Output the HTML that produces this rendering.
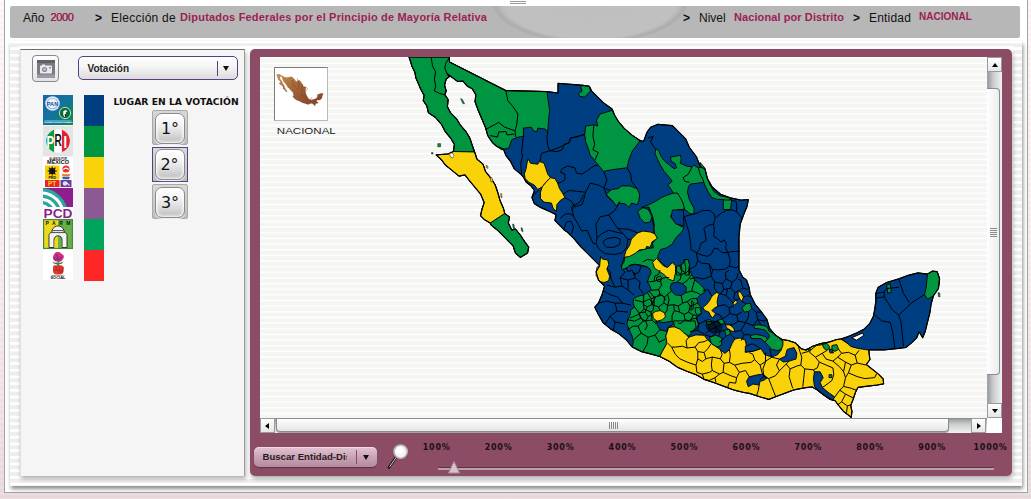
<!DOCTYPE html>
<html lang="es">
<head>
<meta charset="utf-8">
<title>Atlas de Resultados Electorales Federales</title>
<style>
html,body{margin:0;padding:0;}
body{width:1031px;height:499px;overflow:hidden;position:relative;
 font-family:"Liberation Sans",sans-serif;color:#111;
 background:repeating-linear-gradient(to bottom,rgba(255,255,255,.08) 0,rgba(255,255,255,.08) 3px,rgba(120,60,80,.02) 3px,rgba(120,60,80,.02) 6px),linear-gradient(to bottom,#fef7f7 0%,#fbeeef 45%,#f3e3e6 80%,#ebdadd 100%);}
.abs{position:absolute;}
#outer{left:4px;top:-4px;width:1022px;height:495px;background:#fff;border:1px solid #9ca6a6;box-sizing:content-box;}
#rightpink{left:1028px;top:0;width:3px;height:499px;background:#fbf3f3;}
#hdr{left:10px;top:6px;width:1010px;height:32px;border-radius:2px;
 background:#b7b7b7;}
#hdr .sw{left:470px;top:0;width:220px;height:32px;overflow:hidden;background:radial-gradient(ellipse 100px 44px at 50% -6px,rgba(255,255,255,.10) 0,rgba(255,255,255,.13) 88%,rgba(0,0,0,.06) 96%,rgba(0,0,0,0) 100%);}
.t{position:absolute;white-space:nowrap;line-height:1;}
.k{color:#111;font-size:12px;}
.m{color:#9b1f55;font-weight:bold;font-size:11px;}
#stripe{left:10px;top:41px;width:1012px;height:445px;
 background:repeating-linear-gradient(to bottom,#ffffff 0,#ffffff 1.7px,#eeeeee 2.8px,#eeeeee 5.8px,#ffffff 6.7px);
 box-shadow:1px 3px 4px rgba(0,0,0,.45);}
#left{left:20px;top:49px;width:223px;height:426px;background:#f5f5f5;
 border-top:1px solid #6f6f6f;border-right:1px solid #9a9a9a;border-left:1px solid #e0e0e0;box-shadow:1px 3px 4px rgba(0,0,0,.3);}
#mauve{left:250px;top:49px;width:762px;height:427px;background:#8c4c66;border-radius:5px;box-shadow:1px 3px 4px rgba(0,0,0,.3);}
#map{left:260px;top:57px;width:727px;height:361px;overflow:hidden;
 background:repeating-linear-gradient(to bottom,#fbfbfa 0,#ffffff .65px,#f5f5f4 1.95px,#f5f5f4 5px,#fbfbfa 5.65px);}

#cam{left:32px;top:55px;width:25px;height:25px;border:1px solid #8a8a8a;border-radius:4px;background:linear-gradient(#ffffff,#e4e4e4);}
#cam svg{position:absolute;left:4px;top:4px;}
#combo{left:78px;top:56px;width:158px;height:22px;border:1px solid #5b3f86;border-radius:5px;background:linear-gradient(#ffffff 0%,#f4f4f4 45%,#dcdcdc 100%);}
#combo .dv{left:138px;top:4px;width:1px;height:15px;background:#5b3f86;}
.arr{width:0;height:0;border-left:3.5px solid transparent;border-right:3.5px solid transparent;border-top:5px solid #111;}
.dj{font-family:"DejaVu Sans","Liberation Sans",sans-serif;}
.logo{left:43px;width:30px;height:30px;overflow:hidden;}
.bar{left:84px;width:20px;height:31px;}
.pb{left:152px;width:36px;height:35px;background:linear-gradient(#d8d8d8,#bdbdbd);border:1px solid #a9a9a9;box-sizing:border-box;border-radius:2px;}
.pb i{position:absolute;left:2px;top:1.5px;width:30px;height:31px;border-radius:7px;border:1px solid #8a8a8a;box-sizing:border-box;background:linear-gradient(#ffffff 0%,#f4f4f4 35%,#d9d9d9 70%,#bcbcbc 100%);box-shadow:0 1px 1px rgba(255,255,255,.9),inset 0 0 3px 1px #fff;}
.pb b{position:absolute;left:0;top:9.5px;width:34px;text-align:center;font:normal 16px/1 "DejaVu Sans","Liberation Sans",sans-serif;color:#111;}

#vsb{left:987px;top:57px;width:15px;height:361px;box-shadow:inset 1px 0 0 #a5a5a5;background:linear-gradient(to right,#8f9497 0,#c9cccd 40%,#f2f2f2 100%);}
#hsb{left:260px;top:418px;width:727px;height:15px;box-shadow:inset 0 1px 0 #8d8d8d;background:linear-gradient(to bottom,#8f9497 0,#c9cccd 40%,#f2f2f2 100%);}
#corner{left:987px;top:418px;width:15px;height:15px;background:#fff;}
.sbtn{width:15px;height:15px;box-sizing:border-box;border:1px solid #9a9a9a;background:linear-gradient(#ffffff,#e6e6e6);}
#vth{left:0px;top:31px;width:13px;height:287px;border:1px solid #8a8a8a;border-left:0;box-sizing:border-box;border-radius:0 4px 4px 0;background:linear-gradient(to right,#ffffff,#ececec);}
#hth{left:16px;top:1px;width:673px;height:13px;box-shadow:0 1px 1px rgba(0,0,0,.35);border:1px solid #8a8a8a;border-top:0;box-sizing:border-box;border-radius:0 0 4px 4px;background:linear-gradient(to bottom,#ffffff,#e4e4e4);}
#bcombo{left:254px;top:447px;width:123px;height:20px;border-radius:5px;background:linear-gradient(#e2c6d2 0%,#c9a3b5 50%,#b48a9e 100%);box-shadow:0 1px 1px rgba(0,0,0,.35),inset 0 1px 0 rgba(255,255,255,.4);}
#bcombo .dv{left:102px;top:3px;width:1px;height:14px;background:#8c4c66;}
.zl{font-family:"DejaVu Sans","Liberation Sans",sans-serif;font-weight:bold;font-size:8px;letter-spacing:.75px;color:#1a1014;top:443.5px;}
#track{left:438px;top:467px;width:556px;height:2px;background:#b9a0aa;border-top:1px solid #5e3044;border-radius:1px;}
</style>
</head>
<body>
<div id="outer" class="abs"></div>

<div class="abs" style="left:510px;top:1px;width:16px;height:1px;background:#9a9a9a;"></div><div class="abs" style="left:510px;top:3px;width:16px;height:1px;background:#9a9a9a;"></div>
<div id="hdr" class="abs"><div class="sw abs"></div></div>
<span class="t k" style="left:23px;top:12px;">Año</span>
<span class="t m" style="left:50.5px;top:12px;font-weight:normal;letter-spacing:-.35px;text-shadow:0 0 .4px #9b1f55;">2000</span>
<span class="t k" style="left:95px;top:12px;font-weight:bold;">&gt;</span>
<span class="t k" style="left:111px;top:12px;letter-spacing:.27px;">Elección de</span>
<span class="t m" style="left:180px;top:12px;letter-spacing:.18px;">Diputados Federales por el Principio de Mayoría Relativa</span>
<span class="t k" style="left:683px;top:12px;font-weight:bold;">&gt;</span>
<span class="t k" style="left:699px;top:12px;">Nivel</span>
<span class="t m" style="left:734px;top:12px;letter-spacing:.09px;">Nacional por Distrito</span>
<span class="t k" style="left:853px;top:12px;font-weight:bold;">&gt;</span>
<span class="t k" style="left:869px;top:12px;letter-spacing:.2px;">Entidad</span>
<span class="t m" style="left:919px;top:12px;font-size:10px;">NACIONAL</span>

<div id="stripe" class="abs"></div>
<div class="abs" style="left:20px;top:46px;width:993px;height:433px;background:#fff;"></div>
<div id="left" class="abs"></div>

<div id="cam" class="abs"><svg width="18" height="18" viewBox="0 0 18 18"><rect x="0" y="0" width="18" height="18" rx="1" fill="#7a7a82"/><rect x="0" y="0" width="18" height="3" fill="#5f5f68"/><rect x="0" y="14.5" width="18" height="3.5" fill="#9a9aa2"/><rect x="3" y="5.5" width="12" height="8" rx="1" fill="#e9e9ee"/><rect x="5" y="4.5" width="3" height="1.5" fill="#e9e9ee"/><circle cx="7.5" cy="9.5" r="2.6" fill="#8d8d96"/><circle cx="7.5" cy="9.5" r="1.3" fill="#c9c9d0"/><rect x="12" y="7" width="2" height="1.4" fill="#8d8d96"/></svg></div>
<div id="combo" class="abs"><div class="dv abs"></div><div class="arr abs" style="left:144px;top:9px;"></div></div>
<span class="t" style="left:87.5px;top:63.5px;font-size:10px;font-weight:bold;color:#222;">Votación</span>
<span class="t dj" style="left:113.5px;top:97px;font-size:9.25px;font-weight:bold;color:#111;">LUGAR EN LA VOTACIÓN</span>


<!--LOGOS-->
<svg class="abs logo" style="top:95px" viewBox="0 0 30 30" width="30" height="30">
<defs><linearGradient id="lg1" x1="0" y1="0" x2="1" y2="1"><stop offset="0" stop-color="#1d5fb0"/><stop offset=".5" stop-color="#12749a"/><stop offset="1" stop-color="#0b8f3f"/></linearGradient></defs>
<rect width="30" height="30" fill="url(#lg1)"/>
<circle cx="9.5" cy="8.5" r="7.3" fill="#dfeaf6"/><circle cx="9.5" cy="8.5" r="5.6" fill="#6a9ad0"/><circle cx="9.5" cy="8.5" r="5" fill="#eef3fa"/>
<text x="9.5" y="10.6" font-family="Liberation Sans, sans-serif" font-weight="bold" font-size="5.6" text-anchor="middle" fill="#1b4f9e">PAN</text>
<circle cx="22" cy="18" r="5.6" fill="#0a6a34" stroke="#cfe8d6" stroke-width=".9"/>
<path d="M20.3 16.2c1.2-1.4 3.6-1.2 4.2.4l-1.8.5.4 3.4-1.9 1.6-1-2.6z" fill="#fff"/><path d="M21.6 19.2l1.3-.3.2 2-1 .9z" fill="#111"/>
<rect x="1.5" y="25" width="27" height="3" fill="#5aa3d8" opacity=".85"/>
<text x="15" y="27.5" font-family="Liberation Sans, sans-serif" font-weight="bold" font-size="2.3" text-anchor="middle" fill="#eaf4ff">ALIANZA POR EL CAMBIO</text>
</svg>
<svg class="abs logo" style="top:126px" viewBox="0 0 30 30" width="30" height="30">
<rect width="30" height="30" fill="#e4e4e4"/>
<clipPath id="cp2"><circle cx="15" cy="15" r="11.8"/></clipPath>
<g clip-path="url(#cp2)"><rect x="0" y="0" width="11.3" height="30" fill="#0c9a49"/><rect x="11.3" y="0" width="7.6" height="30" fill="#ffffff"/><rect x="18.9" y="0" width="12" height="30" fill="#e2202c"/></g>
<text x="3.4" y="21.6" font-family="Liberation Sans, sans-serif" font-weight="bold" font-size="17" textLength="7.6" lengthAdjust="spacingAndGlyphs" fill="#fff">P</text>
<text x="11.6" y="20.4" font-family="Liberation Sans, sans-serif" font-weight="bold" font-size="16" textLength="7.2" lengthAdjust="spacingAndGlyphs" fill="#111">R</text>
<text x="20.4" y="21.6" font-family="Liberation Sans, sans-serif" font-weight="bold" font-size="17" textLength="3.6" lengthAdjust="spacingAndGlyphs" fill="#fff">I</text>
</svg>
<svg class="abs logo" style="top:157px" viewBox="0 0 30 30" width="30" height="30">
<rect width="30" height="30" fill="#fff"/>
<text x="15" y="3" font-family="Liberation Sans, sans-serif" font-weight="bold" font-size="2.6" text-anchor="middle" fill="#222">ALIANZA POR</text>
<text x="15" y="7.3" font-family="Liberation Sans, sans-serif" font-weight="bold" font-size="5.4" text-anchor="middle" fill="#111" textLength="22" lengthAdjust="spacingAndGlyphs">MÉXICO</text>
<rect x="2" y="8.5" width="14.5" height="14" fill="#f6d10a"/>
<circle cx="9.2" cy="14" r="3.1" fill="#111"/><circle cx="9.2" cy="14" r="1.3" fill="#f6d10a"/>
<path d="M9.2 9.4v9.2M4.6 14h9.2M5.9 10.7l6.6 6.6M12.5 10.7l-6.6 6.6" stroke="#111" stroke-width="1.1"/>
<text x="9.2" y="22.2" font-family="Liberation Sans, sans-serif" font-weight="bold" font-size="3.6" text-anchor="middle" fill="#111">PRD</text>
<rect x="17.5" y="8.5" width="11" height="7" fill="#fff"/><circle cx="23" cy="12" r="3.6" fill="#e63428"/><path d="M20.3 12.6c1.7-2 3.7-2 5.4 0" stroke="#fff" stroke-width="1.2" fill="none"/>
<rect x="17.5" y="15.8" width="11" height="6.8" fill="#f3f3f3"/><path d="M18.5 17.2h9l-1.5 2.3h-6z" fill="#e8742a"/><path d="M19 20h8l-1.2 2.2h-5.6z" fill="#2a62b8"/>
<rect x="2" y="23" width="14.5" height="7" fill="#e3242b"/>
<text x="9.2" y="29.2" font-family="Liberation Sans, sans-serif" font-weight="bold" font-size="6.4" text-anchor="middle" fill="#f8d80a">PT</text>
<rect x="17.5" y="23" width="11" height="7" fill="#6a3c9a"/><circle cx="22" cy="26.5" r="2.2" fill="#e9e1f3"/><path d="M23 25l3.5 3.5" stroke="#e9e1f3" stroke-width="1.1"/>
</svg>
<svg class="abs logo" style="top:188px" viewBox="0 0 30 30" width="30" height="30">
<rect width="30" height="30" fill="#fff"/>
<clipPath id="cp4"><rect x="0" y="0" width="30" height="19"/></clipPath>
<g clip-path="url(#cp4)"><rect width="30" height="19" fill="#8c1f8e"/>
<circle cx="-2" cy="27" r="27" fill="#2aa79a"/><circle cx="-2" cy="27" r="23.6" fill="#fff"/><circle cx="-2" cy="27" r="20.6" fill="#2aa79a"/><circle cx="-2" cy="27" r="17.2" fill="#fff"/><circle cx="-2" cy="27" r="14.2" fill="#2aa79a"/><circle cx="-2" cy="27" r="10.8" fill="#fff"/><circle cx="-2" cy="27" r="8" fill="#2aa79a"/></g>
<text x="15" y="29.6" font-family="Liberation Sans, sans-serif" font-weight="bold" font-size="12.6" text-anchor="middle" fill="#8c1f8e" textLength="29" lengthAdjust="spacingAndGlyphs">PCD</text>
</svg>
<svg class="abs logo" style="top:219px" viewBox="0 0 30 30" width="30" height="30">
<rect width="30" height="30" fill="#3f8a3a"/>
<rect x="1.2" y="1.2" width="13.8" height="27.6" fill="#ecd91e"/><rect x="15" y="1.2" width="13.8" height="27.6" fill="#67b04a"/>
<text x="15" y="5.8" font-family="Liberation Sans, sans-serif" font-weight="bold" font-size="5" text-anchor="middle" fill="#111" textLength="25" lengthAdjust="spacing">PARM</text>
<path d="M6 28.5V16.5c0-2 1.5-3 3-3.4V11.5c1-3.4 4-4.6 6-4.6s5 1.2 6 4.6v1.6c1.500.4 3 1.400 3 3.400V28.500h-5V21c0-2.600-1.600-4.200-4-4.200S11 18.400 11 21v7.500z" fill="#f4f4f4" stroke="#222" stroke-width=".9"/>
<path d="M9.500 11.600h11M8.800 13.600h12.400" stroke="#222" stroke-width=".8"/>
<rect x="11.500" y="21" width="3.500" height="7.500" fill="#ecd91e"/><rect x="15" y="21" width="3.500" height="7.500" fill="#67b04a"/>
</svg>
<svg class="abs logo" style="top:250px" viewBox="0 0 30 30" width="30" height="30">
<rect width="30" height="30" fill="#fff"/>
<path d="M11.500 3.500c2-2 5.500-2 7 .5 2.500.5 3 3 1.500 5-1 2.500-4 3.500-6.500 2.500-3-.5-4-3-3.500-5z" fill="#d32f7c"/>
<path d="M13 4.500c1.500 1 2 3 1 5 2 .5 4-1 4.500-3" fill="none" stroke="#7a2a8e" stroke-width="1.200"/>
<path d="M12 7c-1 1.500-.5 3 1 4" fill="none" stroke="#7a2a8e" stroke-width="1"/>
<path d="M9.500 11.500c2 1.500 4.500 1.500 5.500.5 1 1 4 1 5.500-.5-.5 2-2.500 3-5.500 3s-5-1-5.500-3z" fill="#2f8a3c"/>
<path d="M14.200 13.500h1.800v3h-1.800z" fill="#2f8a3c"/>
<path d="M10 17c0-1.500 2-2.200 3.200-1.500 1-.8 2.600-.8 3.400 0 1-.6 2.600-.3 3 .8 1 .2 1.400 1.200 1.200 2.200l-.4 3.500c-.3 1.500-1.500 2.500-3 2.500h-4c-2 0-3.400-1.500-3.400-3.500z" fill="#e23a34"/>
<path d="M13.200 15.800v4M16.600 15.800v4M19.600 16.600v3.400M10.500 20.200h8.500c1 0 1 1.800 0 1.800h-4" fill="none" stroke="#a01c1c" stroke-width=".7"/>
<text x="15" y="25.700" font-family="Liberation Sans, sans-serif" font-weight="bold" font-size="1.900" text-anchor="middle" fill="#333">DEMOCRACIA</text>
<text x="15" y="29.300" font-family="Liberation Sans, sans-serif" font-weight="bold" font-size="4" text-anchor="middle" fill="#111">SOCIAL</text>
</svg>
<!--/LOGOS-->
<div class="bar abs" style="top:95px;background:#003e82;"></div>
<div class="bar abs" style="top:126px;background:#009540;"></div>
<div class="bar abs" style="top:157px;background:#fad20a;"></div>
<div class="bar abs" style="top:188px;background:#8c5a93;"></div>
<div class="bar abs" style="top:219px;background:#00a45c;"></div>
<div class="bar abs" style="top:250px;background:#ff2626;"></div>

<div class="pb abs" style="top:110px;"><i></i><b>1°</b></div>
<div class="pb abs" style="top:147px;border:1.5px solid #5b3f86;border-radius:0;"><i style="left:1.5px;top:1px;"></i><b style="left:-.5px;top:9px;">2°</b></div>
<div class="pb abs" style="top:184px;"><i></i><b>3°</b></div>
<div id="mauve" class="abs"></div>
<div id="map" class="abs"><!--MAP--><svg width="727" height="361" viewBox="260 57 727 361" style="position:absolute;left:0;top:0">
<g stroke="#000" stroke-width="1" stroke-linejoin="round">
<polygon fill="#003e82" points="449.3,57.0 449.5,62.0 505.9,90.6 547.3,91.6 558.0,93.0 558.0,83.4 580.9,85.1 589.3,86.3 591.7,91.1 597.7,97.1 603.8,103.1 612.2,109.1 614.6,115.2 618.2,121.2 624.2,128.4 632.6,135.6 639.9,140.4 643.5,141.6 647.1,132.0 650.7,127.2 657.9,124.3 672.5,125.6 678.5,131.7 685.7,138.9 689.3,147.3 696.5,156.9 700.2,166.5 705.0,169.0 707.4,178.6 712.2,187.0 720.6,194.2 730.2,197.8 741.1,200.2 748.3,199.5 747.1,206.2 743.8,214.4 740.2,224.1 739.0,236.1 739.0,248.1 739.0,260.2 739.0,269.8 742.6,277.0 746.5,280.0 749.0,287.2 750.2,294.4 755.0,304.1 761.0,311.3 767.0,319.7 769.4,328.1 775.4,335.3 782.6,339.7 788.1,340.5 795.3,342.9 801.4,348.9 806.2,350.1 812.2,346.5 820.6,343.6 829.0,342.1 836.2,339.7 840.9,339.0 848.1,336.6 856.5,333.0 863.8,329.4 869.8,323.4 873.4,316.2 874.6,310.2 875.8,301.7 875.8,293.3 878.2,287.3 886.6,282.5 898.7,278.9 908.3,275.3 917.9,272.9 927.5,274.1 932.3,271.2 937.2,271.7 939.6,278.9 938.4,288.5 933.5,295.7 931.1,304.1 929.9,312.6 927.5,322.2 925.1,331.8 922.7,337.8 919.1,331.8 916.7,337.8 911.9,342.6 905.9,347.5 896.2,348.7 884.2,349.9 869.8,349.9 868.7,350.1 869.9,359.7 866.3,364.5 872.3,369.3 878.4,374.1 883.2,379.0 883.6,383.8 877.2,385.0 867.5,386.2 857.9,387.4 855.5,392.2 853.1,399.4 850.7,405.4 851.9,411.4 851.2,417.4 848.3,415.0 843.5,411.4 838.6,405.4 835.0,400.6 830.2,399.4 823.0,394.6 817.0,389.8 812.2,386.9 803.8,387.9 794.1,389.8 784.5,393.4 776.1,396.5 768.9,399.4 760.5,397.0 749.6,393.4 744.0,392.5 734.4,390.2 724.7,386.6 715.1,383.0 704.3,379.4 695.9,374.6 686.2,371.0 677.8,367.4 669.4,361.4 659.8,356.5 651.4,354.1 641.7,351.7 632.1,346.9 626.1,339.7 618.9,333.7 610.5,328.9 603.2,322.9 598.4,314.4 594.8,307.2 598.5,303.0 602.1,294.6 604.5,286.2 598.5,280.2 596.1,271.7 599.7,265.7 594.9,260.9 587.7,253.7 580.5,246.5 574.4,239.2 567.2,232.0 564.5,230.2 559.7,225.4 554.9,220.6 556.1,214.6 550.1,211.7 540.5,207.4 534.4,203.8 532.0,197.7 534.4,190.5 530.8,185.7 526.0,182.1 523.6,177.3 520.3,173.7 514.3,168.9 510.7,161.7 505.9,155.6 503.5,149.1 496.2,146.0 492.6,142.8 487.8,135.6 485.4,127.2 481.8,118.8 478.2,110.3 475.1,101.9 475.8,94.7 472.2,88.7 467.4,86.3 463.0,81.0 457.7,81.5 451.7,77.1 447.2,73.8 449.3,76.7 446.2,79.0 444.5,85.0 446.2,91.0 444.8,94.7 448.1,99.5 447.4,106.7 450.5,112.7 456.5,118.8 460.2,124.8 466.2,132.0 469.8,138.0 472.2,145.2 474.6,152.0 477.0,159.2 483.0,164.1 485.4,171.3 490.2,177.3 495.0,184.5 497.5,191.7 499.9,200.2 503.5,208.6 504.7,213.4 509.5,217.0 508.3,223.0 511.9,230.2 515.5,229.0 520.3,235.0 525.1,242.3 528.7,247.1 527.5,253.1 520.3,257.4 515.5,253.1 513.1,245.9 505.9,238.7 497.5,230.2 491.4,225.4 490.2,223.0 484.2,219.4 480.6,215.8 481.8,209.8 484.2,202.6 480.6,194.1 474.6,186.9 468.6,179.7 465.0,174.9 459.0,176.1 451.7,170.1 445.7,165.3 440.9,159.2 436.1,154.9 448.1,154.0 453.4,151.5 454.4,144.5 451.0,138.7 445.2,131.5 441.4,124.3 435.6,117.6 428.4,112.7 426.9,106.0 423.3,100.7 424.1,95.4 420.5,88.7 418.0,82.7 415.9,77.9 414.9,72.3 412.0,66.5 410.8,62.2 409.0,57.0"/>
<polygon fill="#009540" stroke-width="0.9" points="453.4,151.5 454.4,144.5 451.0,138.7 445.2,131.5 441.4,124.3 435.6,117.6 428.4,112.7 426.9,106.0 423.3,100.7 424.1,95.4 420.5,88.7 418.0,82.7 415.9,77.9 414.9,72.3 412.0,66.5 410.8,62.2 409.0,57.0 449.3,57.0 449.5,62.0 505.9,90.6 547.3,91.6 547.3,91.6 547.2,93.5 549.6,110.3 548.6,120.0 547.7,131.7 545.0,129.0 537.8,128.1 536.9,131.7 533.3,130.8 531.5,127.2 523.4,128.1 523.4,136.2 518.0,137.1 511.7,139.8 508.9,148.0 501.7,149.8 496.2,146.0 492.6,142.8 487.8,135.6 485.4,127.2 481.8,118.8 478.2,110.3 475.1,101.9 475.8,94.7 472.2,88.7 467.4,86.3 463.0,81.0 457.7,81.5 451.7,77.1 447.2,73.8 449.3,76.7 446.2,79.0 444.5,85.0 446.2,91.0 444.8,94.7 448.1,99.5 447.4,106.7 450.5,112.7 456.5,118.8 460.2,124.8 466.2,132.0 469.8,138.0 472.2,145.2 474.6,152.0"/>
<polygon fill="#009540" stroke-width="0.9" points="504.7,213.4 509.5,217.0 508.3,223.0 511.9,230.2 515.5,229.0 520.3,235.0 525.1,242.3 528.7,247.1 527.5,253.1 520.3,257.4 515.5,253.1 513.1,245.9 505.9,238.7 497.5,230.2 491.4,225.4 490.2,223.0"/>
<polygon fill="#009540" stroke-width="0.9" points="582.1,85.1 589.3,86.3 590.5,91.1 586.9,94.7 584.5,97.1 579.7,96.4 578.5,93.5 582.1,91.1 580.9,87.5"/>
<polygon fill="#009540" stroke-width="0.9" points="612.2,110.3 600.2,114.0 596.5,120.0 597.7,126.0 594.1,124.8 585.7,126.0 584.7,134.4 585.6,141.7 588.4,148.9 590.2,155.2 594.7,160.6 598.3,165.1 602.8,170.5 603.6,171.4 612.6,169.6 627.1,167.8 628.9,159.7 632.5,150.7 638.8,142.6 639.9,140.4 632.6,135.6 624.2,128.4 618.2,121.2 614.6,115.2"/>
<polygon fill="#009540" stroke-width="0.9" points="606.3,194.0 611.7,189.5 618.0,188.6 621.7,185.9 629.8,185.9 637.0,188.6 639.7,194.0 638.8,201.2 637.0,204.8 631.6,203.0 628.9,207.5 625.3,203.9 618.9,203.0 616.2,205.7 612.6,201.2 609.0,198.5"/>
<polygon fill="#009540" stroke-width="0.9" points="637.6,211.2 643.0,207.6 648.4,209.4 652.0,216.7 650.2,222.1 644.8,223.0 640.3,218.5"/>
<polygon fill="#009540" stroke-width="0.9" points="655.9,148.9 658.6,149.8 660.4,155.2 664.1,160.6 669.5,165.1 674.0,168.7 676.7,167.8 674.9,163.3 671.3,161.5 670.4,157.0 676.7,156.1 680.3,155.2 681.2,158.8 680.3,163.3 686.6,166.0 692.0,166.9 693.8,165.1 698.3,167.8 701.0,167.3 700.1,162.4 704.7,167.8 706.5,175.9 710.1,185.0 713.7,191.3 720.0,195.8 723.8,196.5 730.1,198.0 730.1,208.9 723.8,208.9 723.8,199.5 717.3,199.4 711.9,197.6 708.3,192.2 704.7,185.0 703.8,182.3 697.4,183.2 690.2,184.1 688.4,186.8 687.5,192.2 689.3,199.4 692.0,204.8 694.0,208.0 694.0,214.3 689.5,213.4 687.7,211.6 683.2,208.9 681.4,209.8 677.7,209.8 674.1,211.6 670.5,216.1 672.3,218.8 676.8,223.3 680.4,226.0 684.1,227.8 681.4,232.3 675.9,237.7 672.3,244.1 666.9,247.7 660.6,249.5 657.9,255.8 657.8,258.1 662.3,263.5 667.7,268.0 673.2,264.4 675.0,268.9 679.7,265.5 683.4,263.3 684.2,259.5 687.9,259.5 688.7,264.0 689.4,270.0 691.7,274.5 694.7,279.8 699.2,283.6 703.7,288.1 705.2,291.8 700.7,294.8 697.0,298.6 697.7,303.1 700.7,306.9 702.2,308.4 699.2,312.1 697.0,315.2 697.0,319.7 698.5,324.2 696.0,329.0 690.3,332.1 685.8,333.9 681.3,329.4 675.0,326.7 667.7,327.6 668.2,328.9 665.8,336.1 667.0,343.3 662.2,351.7 659.8,356.5 651.4,354.1 641.7,351.7 632.1,346.9 633.3,342.1 632.1,336.1 629.3,330.0 627.0,324.2 627.8,319.7 630.0,315.2 630.8,309.9 634.5,306.9 633.0,303.1 633.8,298.6 637.6,296.4 643.6,294.8 647.3,292.6 651.1,290.3 650.3,286.6 647.3,282.1 648.8,277.6 651.1,273.0 650.3,269.3 647.3,267.0 640.6,265.2 634.5,264.3 629.3,265.5 626.3,268.5 621.8,269.3 621.0,264.8 624.0,262.5 624.8,257.3 630.8,254.9 637.1,251.3 646.2,248.6 653.4,247.7 652.5,243.2 657.0,237.7 653.4,232.3 653.4,231.4 654.3,225.1 652.5,216.1 648.9,207.1 641.5,207.5 648.7,204.8 655.9,201.2 661.3,197.6 667.7,194.9 673.1,193.1 671.3,189.5 667.7,185.0 672.2,181.4 669.5,177.7 664.1,171.4 660.4,165.1 657.7,159.7 655.0,153.4"/>
<polygon fill="#fad20a" stroke-width="0.9" points="453.4,151.5 474.6,152.0 477.0,159.2 483.0,164.1 485.4,171.3 490.2,177.3 495.0,184.5 497.5,191.7 499.9,200.2 503.5,208.6 504.7,213.4 490.2,223.0 484.2,219.4 480.6,215.8 481.8,209.8 484.2,202.6 480.6,194.1 474.6,186.9 468.6,179.7 465.0,174.9 459.0,176.1 451.7,170.1 445.7,165.3 440.9,159.2 436.1,154.9 448.1,154.0 453.4,151.5"/>
<polygon fill="#fad20a" stroke-width="0.9" points="527.9,158.8 530.6,163.3 537.8,164.2 539.6,161.5 544.1,163.3 545.9,168.7 547.7,174.1 550.4,177.7 545.9,182.3 542.3,186.8 537.8,189.5 534.2,185.0 528.8,182.3 525.2,178.6 524.3,174.1 526.1,168.7 527.0,163.3"/>
<polygon fill="#fad20a" stroke-width="0.9" points="550.4,177.7 555.0,178.6 557.7,183.2 559.5,188.6 563.1,194.0 564.9,197.6 560.4,200.3 556.8,204.8 556.5,211.5 553.2,208.4 551.4,203.0 544.1,202.1 540.5,198.5 540.5,192.2 542.3,186.8 545.9,182.3"/>
<polygon fill="#fad20a" stroke-width="0.9" points="624.1,257.3 625.9,250.9 629.5,245.5 631.3,239.2 637.6,232.9 643.0,231.1 650.2,232.0 654.7,233.8 657.4,238.3 652.0,241.9 650.2,247.3 646.6,246.4 645.7,249.1 639.4,250.0 634.9,253.6 629.5,256.4"/>
<polygon fill="#fad20a" stroke-width="0.9" points="600.6,256.4 602.4,259.1 607.8,260.0 608.7,264.5 606.9,269.0 609.6,276.2 608.7,280.7 604.2,282.5 599.7,281.6 596.1,275.3 597.0,267.2 599.7,265.4"/>
<polygon fill="#fad20a" stroke-width="0.9" points="652.6,262.5 656.6,258.3 660.0,262.3 663.6,266.0 667.6,267.5 672.3,262.8 675.8,265.8 675.4,273.0 673.6,281.0 668.6,279.0 664.0,274.6 659.4,271.4 654.6,268.2"/>
<polygon fill="#fad20a" stroke-width="0.9" points="652.6,313.6 655.6,311.4 660.1,310.6 664.6,312.9 665.4,316.7 662.4,319.7 657.1,321.2 653.3,318.2"/>
<polygon fill="#fad20a" stroke-width="0.9" points="659.8,356.5 662.2,351.7 667.0,343.3 665.8,336.1 668.2,328.9 667.7,327.6 675.0,326.7 681.3,329.4 685.8,333.9 688.7,337.3 695.9,334.9 704.1,335.3 707.7,339.8 711.4,343.5 716.8,347.1 720.4,349.8 724.9,353.4 729.4,349.8 732.1,343.5 734.8,338.9 740.2,338.0 745.3,340.2 746.5,346.2 745.3,352.2 753.8,351.0 761.0,348.6 764.6,354.6 771.8,357.0 777.8,354.6 781.4,349.8 782.6,342.6 782.6,339.7 788.1,340.5 795.3,342.9 801.4,348.9 806.2,350.1 812.2,346.5 820.6,343.6 829.0,342.1 836.2,339.7 840.9,339.0 845.9,341.7 850.7,346.5 857.9,348.4 868.7,350.1 869.9,359.7 866.3,364.5 872.3,369.3 878.4,374.1 883.2,379.0 883.6,383.8 877.2,385.0 867.5,386.2 857.9,387.4 855.5,392.2 853.1,399.4 850.7,405.4 851.9,411.4 851.2,417.4 848.3,415.0 843.5,411.4 838.6,405.4 835.0,400.6 830.2,399.4 823.0,394.6 817.0,389.8 812.2,386.9 803.8,387.9 794.1,389.8 784.5,393.4 776.1,396.5 768.9,399.4 760.5,397.0 749.6,393.4 744.0,392.5 734.4,390.2 724.7,386.6 715.1,383.0 704.3,379.4 695.9,374.6 686.2,371.0 677.8,367.4 669.4,361.4 659.8,356.5"/>
<polygon fill="#009540" stroke-width="0.9" points="753.5,325.3 758.9,324.7 764.9,325.9 767.9,327.7 768.5,330.7 771.5,332.5 774.5,333.7 780.5,339.1 782.9,341.5 782.9,345.7 780.5,349.9 776.9,350.5 771.5,349.3 768.5,345.7 764.9,342.1 767.3,339.7 769.7,336.1 767.3,332.5 764.9,330.1 759.5,328.9 754.7,328.3"/>
<polygon fill="#009540" stroke-width="0.9" points="750.5,335.5 755.9,334.3 761.3,335.5 766.1,336.7 767.3,339.7 764.9,342.1 760.7,338.5 755.9,338.5 751.1,338.5"/>
<polygon fill="#009540" stroke-width="0.9" points="927.5,274.1 932.3,271.2 937.2,271.7 939.6,278.9 938.4,288.5 933.5,295.7 927.5,299.3 924.6,294.5 926.3,286.1"/>
<polygon fill="#009540" stroke-width="0.9" points="886.6,284.9 890.2,283.7 891.4,292.1 887.8,293.3"/>
<polygon fill="#009540" stroke-width="0.9" points="723.3,200.0 731.7,200.0 730.5,209.6 723.3,209.6"/>
<polygon fill="#fad20a" stroke-width="0.9" points="702.8,307.6 706.5,304.6 709.5,300.8 711.8,296.3 716.3,292.6 719.3,293.3 717.8,297.8 717.1,302.3 717.8,306.1 714.1,308.3 711.8,310.6 715.6,313.6 712.6,318.1 710.3,315.1 708.8,312.1 705.0,310.6"/>
<polygon fill="#fad20a" stroke-width="0.9" points="738.1,291.1 741.1,292.6 743.4,297.1 741.9,301.6 739.6,298.6 738.1,294.8"/>
<polygon fill="#fad20a" stroke-width="0.9" points="732.9,303.1 735.9,300.1 737.4,302.3 734.4,305.3"/>
<polygon fill="#fad20a" stroke-width="0.9" points="725.3,324.9 729.8,324.9 733.6,327.9 735.1,331.7 731.4,330.9 726.8,327.9"/>
<polygon fill="#009540" stroke-width="0.9" points="695.3,307.6 700.5,307.6 701.3,313.6 697.5,315.1 695.3,312.1"/>
<polygon fill="#009540" stroke-width="0.9" points="741.9,307.6 746.4,303.8 750.2,303.1 751.7,308.3 748.6,311.4 744.1,312.1"/>
<polygon fill="#009540" stroke-width="0.9" points="717.8,320.4 722.3,318.9 724.6,322.6 720.8,324.9"/>
<polygon fill="#009540" stroke-width="0.9" points="705.8,320.4 710.3,319.6 712.6,323.4 708.0,324.9"/>
<polygon fill="#009540" stroke-width="0.9" points="724.6,330.2 729.1,329.4 730.6,333.9 726.1,336.2"/>
<polygon fill="#009540" stroke-width="0.9" points="711.1,336.9 718.6,336.2 719.3,342.2 712.6,343.7"/>
<polygon fill="#009540" stroke-width="0.9" points="691.5,300.8 693.8,302.3 693.0,309.1 690.8,310.3 691.8,305.3"/>
<polygon fill="#009540" stroke-width="0.9" points="709.5,337.1 715.9,335.3 722.2,338.0 721.3,345.3 716.8,347.1 711.3,343.5"/>
<polygon fill="#009540" stroke-width="0.9" points="673.5,320.9 695.1,320.9 696.0,327.2 692.4,331.2 688.8,336.2 683.4,332.6 679.8,329.0 674.4,326.9"/>
<polygon fill="#003e82" stroke-width="0.9" points="671.4,283.6 676.7,282.1 682.7,283.6 686.4,287.3 685.7,292.6 681.2,295.6 675.2,294.8 671.4,291.1 670.3,287.3"/>
<polygon fill="#003e82" stroke-width="0.9" points="655.6,321.2 663.1,322.7 672.1,321.2 673.6,324.2 668.0,327.6 667.0,331.3 660.0,330.0"/>
<polygon fill="#003e82" stroke-width="0.9" points="746.5,381.3 749.2,376.8 756.5,375.0 762.8,374.1 767.3,377.7 763.7,380.4 760.1,381.3 759.2,385.0 752.9,384.1 748.3,386.8"/>
<polygon fill="#003e82" stroke-width="0.9" points="745.3,346.2 752.6,343.8 761.0,348.6 753.8,351.0 745.3,352.2"/>
<polygon fill="#003e82" stroke-width="0.9" points="672.5,210.0 683.3,210.0 684.0,226.0 676.0,224.0 671.0,217.0"/>
<polygon fill="#009540" stroke-width="0.9" points="684.3,260.2 688.0,259.4 689.5,264.7 688.8,269.2 689.5,275.0 685.0,275.0 685.8,267.7"/>
<polygon fill="#009540" stroke-width="0.9" points="676.8,266.2 681.3,265.4 682.0,270.7 680.5,275.0 676.8,275.0 676.0,270.7"/>
<polygon fill="#003e82" stroke-width="0.9" points="814.4,371.8 820.2,371.8 823.2,377.6 820.2,382.5 822.2,387.3 828.0,392.2 834.8,397.0 832.9,400.0 826.1,396.1 818.3,390.2 814.4,386.4 813.4,378.6"/>
<polygon fill="#003e82" stroke-width="0.9" points="779.4,359.1 785.3,356.2 787.2,349.4 794.0,347.5 796.9,353.3 796.0,359.1 789.1,361.1 783.3,362.1"/>
<polygon fill="#009540" stroke-width="0.9" points="822.2,344.6 827.0,343.2 830.0,347.5 827.0,350.4 824.1,348.5"/>
<polygon fill="#009540" stroke-width="0.9" points="831.9,345.5 836.8,344.6 838.7,349.4 834.8,351.4 831.9,349.4"/>
<polygon fill="#003e82" stroke-width="0.9" points="829.0,349.0 832.3,349.4 833.5,352.9 830.0,352.9"/>
<polygon fill="#009540" stroke-width="0.9" points="829.0,374.7 831.9,374.7 831.9,377.6 829.0,377.6"/>
<polygon fill="#009540" stroke-width="0.9" points="806.6,349.0 811.5,349.0 810.1,351.4"/>
<polygon fill="#fafafa" points="851.7,337.8 862.6,333.0 863.8,335.4 856.5,340.2"/>
</g>
<g fill="none" stroke="#000" stroke-width="1" stroke-linejoin="round">
<polyline points="431.3,57.9 432.5,65.8 435.6,71.8 434.4,79.0 435.6,86.3 434.4,91.0 439.7,93.5 444.8,94.7"/>
<polyline points="449.3,57.9 445.7,63.4 444.8,68.2 447.2,73.8"/>
<polyline points="505.9,90.6 507.8,100.7 513.1,106.7 517.9,114.0 516.7,124.8 515.0,130.8 515.5,136.8"/>
<polyline points="485.4,128.4 487.8,128.4 498.7,122.4 504.7,127.2 515.0,130.8"/>
<polyline points="490.2,135.6 497.5,137.0 498.7,132.0 506.0,131.5 507.0,135.0 514.0,134.0"/>
<polyline points="547.7,131.7 546.8,138.0 547.7,145.3 549.5,150.7 556.8,151.6 562.2,149.8 564.0,144.4 569.4,142.6 570.3,138.0 576.6,137.1 582.0,135.3 584.5,134.4"/>
<polyline points="549.6,151.2 549.6,151.2 561.7,146.4 568.9,142.8 571.3,138.0 579.7,135.6 584.5,134.4"/>
<polyline points="593.8,125.4 592.9,136.2 594.7,144.4 592.9,149.8 598.3,152.5 594.7,160.6"/>
<polyline points="549.5,150.7 541.4,153.4 540.5,158.8 539.6,161.5"/>
<polyline points="560.4,172.3 562.2,168.7 567.6,166.0 574.8,167.8 576.6,173.2 582.0,174.1 587.4,170.5 593.8,166.0 598.3,165.1"/>
<polyline points="560.4,172.3 564.9,174.1 564.9,179.5 561.3,182.3 557.7,183.2"/>
<polyline points="563.1,194.0 569.4,190.4 576.6,191.3 585.6,192.2 590.2,183.2 598.3,185.0 605.5,188.6 610.0,190.4"/>
<polyline points="585.6,192.2 583.8,199.4 582.0,204.8 574.8,206.6 571.2,210.0"/>
<polyline points="564.9,197.6 571.2,201.2 574.8,206.6"/>
<polyline points="523.4,136.2 521.6,152.5 522.5,156.1 520.7,163.3 521.6,174.1"/>
<polyline points="531.5,196.7 538.7,190.4"/>
<polyline points="603.6,171.4 607.0,180.0 604.0,188.0 606.3,194.0"/>
<polyline points="647.8,138.0 653.2,136.2 650.5,141.7 654.1,147.1 655.9,148.9"/>
<polyline points="627.1,167.8 630.7,174.1 631.6,181.4 635.2,185.9 637.0,188.6"/>
<polyline points="673.1,193.1 677.6,193.1 680.3,197.6 683.0,203.0 684.8,210.0"/>
<polyline points="689.3,182.3 684.8,181.4 683.0,177.7 688.4,174.1 692.0,166.9"/>
<polyline points="698.3,167.8 700.1,174.1 702.9,179.5 703.8,182.3"/>
<polyline points="597.0,238.3 601.5,233.8 608.7,230.2 615.9,232.0 623.2,233.8 627.7,239.2 626.8,247.3 622.3,252.7 614.1,254.5 605.1,253.6 598.8,249.1 596.1,243.7 597.0,238.3"/>
<polyline points="603.3,241.0 607.8,238.3 615.9,237.4 620.4,239.2 619.5,244.6 614.1,247.3 606.9,247.3 604.2,244.6 603.3,241.0"/>
<polyline points="583.5,195.0 579.8,202.2 571.7,206.7 573.5,216.7 578.0,223.9 581.7,231.1 587.1,230.2 590.7,238.3 593.4,243.7 596.1,243.7"/>
<polyline points="560.0,218.5 565.4,213.9 570.8,213.9 573.5,216.7"/>
<polyline points="563.6,230.2 566.3,222.1 570.8,221.2 573.5,226.6 571.7,233.8"/>
<polyline points="619.5,201.3 617.7,205.8 614.1,211.2 608.7,214.9 613.2,222.1 617.7,228.4 623.2,233.8"/>
<polyline points="608.7,214.9 600.0,217.0 596.0,224.0 597.0,238.3"/>
<polyline points="627.7,239.2 631.3,239.2"/>
<polyline points="617.7,228.4 628.6,229.3 637.6,232.9"/>
<polyline points="652.0,216.7 653.8,227.5 654.7,233.8"/>
<polyline points="624.1,257.3 622.3,263.6 621.4,267.2"/>
<polyline points="606.0,195.0 611.4,199.5 614.1,203.1"/>
<polyline points="647.3,282.1 654.1,281.3 660.1,279.1 665.4,277.6 669.1,277.6"/>
<polyline points="660.1,279.1 661.6,285.1 658.6,289.6 660.1,294.1 664.6,297.1 667.6,294.1 671.4,291.1"/>
<polyline points="651.1,290.3 658.6,289.6"/>
<polyline points="660.1,294.1 655.6,297.1 651.1,298.6 647.3,292.6"/>
<polyline points="664.6,297.1 663.9,303.1 667.6,305.4 673.6,304.6 678.2,306.1 682.7,303.1 681.2,295.6"/>
<polyline points="651.1,298.6 651.8,304.6 647.3,306.9 643.6,304.6 643.6,294.8"/>
<polyline points="651.8,304.6 658.6,306.9 663.9,303.1"/>
<polyline points="647.3,306.9 645.1,312.1 648.1,316.7 652.6,313.6"/>
<polyline points="645.1,312.1 639.1,312.9 634.5,306.9"/>
<polyline points="639.1,312.9 640.6,318.2 645.8,321.2 648.1,316.7"/>
<polyline points="640.6,318.2 634.5,321.2 627.8,319.7"/>
<polyline points="645.8,321.2 647.3,325.7 645.1,330.0"/>
<polyline points="667.6,305.4 666.9,311.4 664.6,312.9"/>
<polyline points="673.6,304.6 674.4,310.6 672.1,315.2 672.1,321.2"/>
<polyline points="678.2,306.1 679.7,312.1 684.2,314.4 688.7,312.1 690.2,306.1 687.2,301.6 682.7,303.1"/>
<polyline points="690.2,306.1 694.7,304.6 697.7,303.1"/>
<polyline points="684.2,314.4 684.9,319.7 681.2,323.4 678.2,323.4"/>
<polyline points="688.7,312.1 693.2,315.2 697.0,315.2"/>
<polyline points="684.9,319.7 690.2,321.2 693.2,315.2"/>
<polyline points="685.7,292.6 691.7,291.1 697.0,292.6 700.7,294.8"/>
<polyline points="691.7,291.1 693.2,285.1 694.7,279.8"/>
<polyline points="687.2,301.6 691.7,298.6 697.0,298.6"/>
<polyline points="675.2,266.3 676.7,271.5 681.2,274.5 685.7,273.0 689.4,270.0"/>
<polyline points="681.2,274.5 680.4,279.1 676.7,282.1"/>
<polyline points="682.7,283.6 687.2,280.6 691.7,274.5"/>
<polyline points="654.1,281.3 654.8,276.1 658.6,274.5 660.1,270.0"/>
<polyline points="656.4,277.6 660.1,276.1 662.4,278.3 660.1,281.3 657.1,281.3 656.4,277.6"/>
<polyline points="629.3,265.5 634.5,264.3 640.6,265.2 647.3,267.0"/>
<polyline points="642.8,261.8 647.3,259.5 653.3,260.3"/>
<polyline points="679.7,265.5 681.2,270.0 685.7,273.0"/>
<polyline points="667.6,305.4 669.1,300.1 667.6,294.1"/>
<polyline points="674.4,310.6 679.7,312.1"/>
<polyline points="658.6,306.9 660.1,310.6"/>
<polyline points="655.6,297.1 651.8,304.6"/>
<polyline points="684.3,216.5 692.6,214.3 697.8,212.8 702.3,210.5 709.8,210.5 714.4,214.3 715.1,218.0 721.9,212.8 726.4,210.5 730.9,209.8"/>
<polyline points="730.9,209.8 736.2,211.3 740.7,216.5 742.2,219.5"/>
<polyline points="715.1,218.0 713.6,224.1 707.6,225.6 703.8,228.6 705.3,234.6 706.1,240.6 700.8,243.6 699.3,249.6 696.3,252.6"/>
<polyline points="713.6,224.1 714.4,230.1 713.6,236.1 718.1,239.1 721.1,242.1 724.1,239.8 726.4,243.6 725.6,248.1 727.9,252.6 730.2,251.9 739.9,251.1"/>
<polyline points="684.3,216.5 686.5,224.1 688.8,231.6 690.3,240.6 691.1,249.6 696.3,252.6 697.8,260.2 695.6,266.2 689.5,269.2 688.8,275.0"/>
<polyline points="696.3,252.6 701.6,254.9 707.6,256.4 711.4,254.1 714.4,248.1 718.1,248.9 721.9,252.6 727.9,252.6"/>
<polyline points="697.8,260.2 701.6,263.2 709.1,263.9 712.1,269.2 718.1,269.9 724.9,269.2 729.4,266.2 730.2,260.2 727.9,252.6"/>
<polyline points="729.4,266.2 736.2,267.7 739.2,266.2"/>
<polyline points="709.1,263.9 711.4,275.0"/>
<polyline points="730.9,200.0 736.2,201.5 736.9,209.0 736.2,211.3"/>
<polyline points="668.0,343.5 671.7,347.1 675.3,354.3 679.8,358.8 687.9,362.4 696.0,365.1 697.8,358.8 697.8,351.6 695.1,347.1 687.0,348.0 682.5,346.2 675.3,347.1 671.7,347.1"/>
<polyline points="687.0,348.0 686.1,340.8 688.8,337.1"/>
<polyline points="695.1,347.1 698.7,342.6 704.1,341.7 707.7,339.8"/>
<polyline points="697.8,351.6 704.1,352.5 707.7,348.9 711.3,343.5"/>
<polyline points="704.1,352.5 705.9,358.8 702.3,361.5 697.8,358.8"/>
<polyline points="705.9,358.8 712.3,357.0 720.4,358.8 722.2,354.3 720.4,349.8"/>
<polyline points="712.3,357.0 711.3,365.1 712.3,370.5 719.5,374.1 723.1,372.3 724.0,363.3 720.4,358.8"/>
<polyline points="696.0,365.1 696.9,372.3 702.3,374.1 709.5,372.3 712.3,370.5"/>
<polyline points="702.3,374.1 704.1,379.5 709.5,380.4 715.0,377.7 719.5,374.1"/>
<polyline points="724.0,363.3 729.4,362.4 734.8,365.1 739.3,372.3 736.6,377.7 731.2,375.9 723.1,372.3"/>
<polyline points="729.4,362.4 730.3,355.2 729.4,349.8"/>
<polyline points="734.8,365.1 742.0,363.3 751.0,362.4 754.7,359.7 752.9,354.3 749.2,352.5"/>
<polyline points="739.3,372.3 745.6,370.5 749.2,376.8"/>
<polyline points="736.6,377.7 735.7,383.2 729.4,382.3 727.6,387.7"/>
<polyline points="754.7,359.7 760.1,365.1 761.9,372.3 762.8,374.1"/>
<polyline points="760.1,365.1 765.5,361.5 765.5,352.5"/>
<polyline points="715.0,377.7 715.9,382.3"/>
<polyline points="759.2,385.0 758.3,390.4 756.5,395.8"/>
<polyline points="797.9,344.6 799.8,351.4 801.8,357.2 800.8,365.0 804.7,368.9 813.4,369.8 814.4,371.8"/>
<polyline points="801.8,353.3 808.6,351.4 815.4,357.2 819.3,362.1 817.3,367.9 813.4,369.8"/>
<polyline points="811.5,349.4 816.4,345.5 822.2,344.6"/>
<polyline points="815.4,357.2 822.2,353.3 827.0,350.4"/>
<polyline points="819.3,362.1 826.1,365.0 832.9,367.9 833.8,374.7 831.9,380.5 824.1,386.4 822.2,387.3"/>
<polyline points="822.2,353.3 826.1,359.1 832.9,361.1 839.7,366.9 843.6,371.8 845.5,377.6 843.6,386.4 839.7,390.2 834.8,397.0"/>
<polyline points="832.9,361.1 837.7,357.2 841.6,353.3 838.7,349.4"/>
<polyline points="837.7,357.2 845.5,362.1 851.3,365.0 857.2,363.0 865.9,365.0"/>
<polyline points="841.6,353.3 848.4,352.3 855.2,355.3 859.1,350.4"/>
<polyline points="855.2,355.3 857.2,363.0"/>
<polyline points="845.5,362.1 843.6,371.8"/>
<polyline points="851.3,365.0 848.4,372.8 845.5,377.6"/>
<polyline points="848.4,372.8 857.2,376.6 864.9,378.6 874.7,377.6 876.6,373.7"/>
<polyline points="843.6,386.4 851.3,388.3 856.2,390.2"/>
<polyline points="839.7,390.2 845.5,394.1 853.3,398.0"/>
<polyline points="845.5,394.1 841.6,401.9 837.7,404.8"/>
<polyline points="841.6,401.9 847.4,405.8 851.3,404.8"/>
<polyline points="847.4,405.8 846.5,412.6"/>
<polyline points="779.4,359.1 776.5,365.0 779.4,370.8 775.5,375.7 768.7,378.6 771.7,386.4 775.5,396.1"/>
<polyline points="779.4,370.8 786.2,364.0 789.1,361.1"/>
<polyline points="786.2,364.0 790.1,368.9 789.1,376.6 792.1,386.4 793.0,388.3"/>
<polyline points="790.1,368.9 796.9,366.0 800.8,365.0"/>
<polyline points="804.7,368.9 803.7,378.6 802.8,386.7"/>
<polyline points="768.7,378.6 763.9,376.6 760.0,379.6"/>
<polyline points="763.9,376.6 762.9,368.9 765.8,361.1 771.7,357.2 779.4,359.1"/>
<polyline points="771.7,357.2 769.7,348.5"/>
<polyline points="690.0,279.0 696.0,277.5 703.5,279.0 711.1,276.0 712.6,270.0"/>
<polyline points="711.1,276.0 714.8,282.0 714.1,288.0 717.1,292.6"/>
<polyline points="714.8,282.0 722.3,283.5 726.1,279.0 725.3,273.0 729.1,270.0"/>
<polyline points="726.1,279.0 732.1,282.0 736.6,279.0 738.1,273.0"/>
<polyline points="732.1,282.0 730.6,288.0 735.1,292.6 738.1,291.1"/>
<polyline points="722.3,283.5 723.8,289.5 720.1,294.1"/>
<polyline points="723.8,289.5 730.6,288.0"/>
<polyline points="735.1,292.6 733.6,298.6 735.9,300.1"/>
<polyline points="743.4,297.1 747.9,295.6 750.2,297.1"/>
<polyline points="702.8,291.1 708.0,289.5 711.8,296.3"/>
<polyline points="719.3,293.3 726.1,295.6 730.6,300.1 732.9,303.1"/>
<polyline points="726.1,295.6 727.6,289.5"/>
<polyline points="717.8,306.1 724.6,304.6 729.1,307.6 733.6,306.1"/>
<polyline points="729.1,307.6 729.8,313.6 726.1,316.6 722.3,318.9"/>
<polyline points="729.8,313.6 736.6,315.1 741.9,312.1"/>
<polyline points="736.6,315.1 738.1,321.1 733.6,324.1 729.8,324.9"/>
<polyline points="738.1,321.1 745.6,322.6 753.2,325.6"/>
<polyline points="745.6,322.6 748.6,316.6 748.6,311.4"/>
<polyline points="751.7,308.3 756.2,312.1 760.7,312.1"/>
<polyline points="756.2,312.1 757.7,319.6 753.2,325.6"/>
<polyline points="757.7,319.6 763.7,321.1 766.7,319.6"/>
<polyline points="715.6,313.6 720.1,315.1 722.3,318.9"/>
<polyline points="690.0,319.6 696.0,318.1 701.3,313.6"/>
<polyline points="696.0,318.1 699.0,324.1 705.8,320.4"/>
<polyline points="699.0,324.1 697.5,330.2 690.0,331.7"/>
<polyline points="697.5,330.2 705.0,334.7"/>
<polyline points="712.6,323.4 717.8,320.4"/>
<polyline points="724.6,322.6 725.3,324.9"/>
<polyline points="735.1,331.7 741.1,330.2 744.1,334.7 741.1,340.7"/>
<polyline points="741.1,330.2 745.6,322.6"/>
<polyline points="744.1,334.7 750.2,334.7"/>
<polyline points="730.6,333.9 735.1,339.2"/>
<polyline points="719.3,342.2 726.1,336.2"/>
<polyline points="705.0,334.7 711.1,336.9"/>
<polyline points="760.7,324.9 757.7,319.6"/>
<polyline points="741.9,301.6 746.4,303.8"/>
<polyline points="739.6,298.6 735.9,300.1"/>
<polyline points="747.9,289.5 742.6,288.0 738.1,291.1"/>
<polyline points="742.6,288.0 741.1,280.5 738.1,279.0"/>
<polyline points="708.0,324.9 709.5,330.2 705.8,333.2"/>
<polyline points="712.6,323.4 716.3,327.1 720.8,324.9"/>
<polyline points="709.5,330.2 716.3,327.1 720.1,331.7 724.6,330.2"/>
<polyline points="716.3,327.1 715.6,333.2 711.1,336.9"/>
<polyline points="720.1,331.7 718.6,336.2"/>
<polyline points="706.5,321.9 712.6,321.1 718.6,321.9 722.3,325.6 720.8,330.9 714.8,333.2 708.8,330.9 706.2,326.4 706.5,321.9"/>
<polyline points="875.8,298.1 884.2,296.9 892.6,310.2 898.7,315.0 901.1,322.2 903.5,346.2"/>
<polyline points="898.7,315.0 913.1,301.7 924.6,294.5"/>
<polyline points="898.7,278.9 903.5,293.3 909.5,302.9"/>
<polyline points="873.4,313.8 881.8,321.0 890.2,322.2 892.6,331.8 895.0,348.7"/>
<polyline points="875.8,293.3 884.2,292.1 886.6,288.5 898.7,287.3"/>
<polyline points="884.2,292.1 884.2,296.9"/>
<polyline points="840.9,339.0 848.1,343.8"/>
<polyline points="607.0,285.1 615.1,287.1 622.1,286.1 628.1,290.1 634.1,295.1"/>
<polyline points="604.0,291.1 611.1,295.1 618.1,297.1 622.1,303.1 631.1,305.1"/>
<polyline points="622.1,286.1 620.1,278.0 625.1,272.0 623.1,270.0"/>
<polyline points="615.1,287.1 611.1,279.0 610.1,272.0 607.0,268.0"/>
<polyline points="620.1,278.0 628.1,280.0 635.1,278.0 640.1,282.0 639.1,288.1 643.1,293.1"/>
<polyline points="628.1,280.0 628.1,290.1"/>
<polyline points="598.0,303.1 607.0,301.1 615.1,303.1 622.1,303.1"/>
<polyline points="615.1,303.1 617.1,311.1 610.1,316.1 605.0,324.1"/>
<polyline points="617.1,311.1 628.1,312.1"/>
<polyline points="610.1,316.1 615.1,322.1 625.1,324.1"/>
<polyline points="615.1,322.1 613.1,331.1"/>
<polyline points="626.1,267.0 628.1,272.0 632.1,270.0 634.1,275.0 639.1,272.0 641.1,266.0"/>
<polyline points="635.1,278.0 634.1,272.0"/>
<polyline points="635.1,300.1 643.1,302.1 649.1,299.1 654.1,303.1 653.1,310.1"/>
<polyline points="643.1,302.1 644.1,309.1 639.1,314.1 630.1,318.1"/>
<polyline points="644.1,309.1 651.1,312.1 653.1,310.1"/>
<polyline points="639.1,314.1 643.1,321.1 638.1,326.1 633.1,326.1 627.1,330.1"/>
<polyline points="643.1,321.1 652.1,320.1 656.1,324.1"/>
<polyline points="652.1,320.1 651.1,312.1"/>
<polyline points="638.1,326.1 641.1,333.1 648.1,337.2 647.1,344.2 643.1,351.2"/>
<polyline points="648.1,337.2 655.1,335.2 660.2,329.1"/>
<polyline points="655.1,335.2 659.1,342.2 665.2,339.2"/>
<polyline points="641.1,333.1 633.1,340.2"/>
<polyline points="649.1,291.1 654.1,297.1 662.2,295.1 666.2,300.1"/>
<polyline points="654.1,297.1 654.1,303.1"/>
</g>
<polygon fill="none" stroke="#000" stroke-width="1.2" stroke-linejoin="round" points="449.3,57.0 449.5,62.0 505.9,90.6 547.3,91.6 558.0,93.0 558.0,83.4 580.9,85.1 589.3,86.3 591.7,91.1 597.7,97.1 603.8,103.1 612.2,109.1 614.6,115.2 618.2,121.2 624.2,128.4 632.6,135.6 639.9,140.4 643.5,141.6 647.1,132.0 650.7,127.2 657.9,124.3 672.5,125.6 678.5,131.7 685.7,138.9 689.3,147.3 696.5,156.9 700.2,166.5 705.0,169.0 707.4,178.6 712.2,187.0 720.6,194.2 730.2,197.8 741.1,200.2 748.3,199.5 747.1,206.2 743.8,214.4 740.2,224.1 739.0,236.1 739.0,248.1 739.0,260.2 739.0,269.8 742.6,277.0 746.5,280.0 749.0,287.2 750.2,294.4 755.0,304.1 761.0,311.3 767.0,319.7 769.4,328.1 775.4,335.3 782.6,339.7 788.1,340.5 795.3,342.9 801.4,348.9 806.2,350.1 812.2,346.5 820.6,343.6 829.0,342.1 836.2,339.7 840.9,339.0 848.1,336.6 856.5,333.0 863.8,329.4 869.8,323.4 873.4,316.2 874.6,310.2 875.8,301.7 875.8,293.3 878.2,287.3 886.6,282.5 898.7,278.9 908.3,275.3 917.9,272.9 927.5,274.1 932.3,271.2 937.2,271.7 939.6,278.9 938.4,288.5 933.5,295.7 931.1,304.1 929.9,312.6 927.5,322.2 925.1,331.8 922.7,337.8 919.1,331.8 916.7,337.8 911.9,342.6 905.9,347.5 896.2,348.7 884.2,349.9 869.8,349.9 868.7,350.1 869.9,359.7 866.3,364.5 872.3,369.3 878.4,374.1 883.2,379.0 883.6,383.8 877.2,385.0 867.5,386.2 857.9,387.4 855.5,392.2 853.1,399.4 850.7,405.4 851.9,411.4 851.2,417.4 848.3,415.0 843.5,411.4 838.6,405.4 835.0,400.6 830.2,399.4 823.0,394.6 817.0,389.8 812.2,386.9 803.8,387.9 794.1,389.8 784.5,393.4 776.1,396.5 768.9,399.4 760.5,397.0 749.6,393.4 744.0,392.5 734.4,390.2 724.7,386.6 715.1,383.0 704.3,379.4 695.9,374.6 686.2,371.0 677.8,367.4 669.4,361.4 659.8,356.5 651.4,354.1 641.7,351.7 632.1,346.9 626.1,339.7 618.9,333.7 610.5,328.9 603.2,322.9 598.4,314.4 594.8,307.2 598.5,303.0 602.1,294.6 604.5,286.2 598.5,280.2 596.1,271.7 599.7,265.7 594.9,260.9 587.7,253.7 580.5,246.5 574.4,239.2 567.2,232.0 564.5,230.2 559.7,225.4 554.9,220.6 556.1,214.6 550.1,211.7 540.5,207.4 534.4,203.8 532.0,197.7 534.4,190.5 530.8,185.7 526.0,182.1 523.6,177.3 520.3,173.7 514.3,168.9 510.7,161.7 505.9,155.6 503.5,149.1 496.2,146.0 492.6,142.8 487.8,135.6 485.4,127.2 481.8,118.8 478.2,110.3 475.1,101.9 475.8,94.7 472.2,88.7 467.4,86.3 463.0,81.0 457.7,81.5 451.7,77.1 447.2,73.8 449.3,76.7 446.2,79.0 444.5,85.0 446.2,91.0 444.8,94.7 448.1,99.5 447.4,106.7 450.5,112.7 456.5,118.8 460.2,124.8 466.2,132.0 469.8,138.0 472.2,145.2 474.6,152.0 477.0,159.2 483.0,164.1 485.4,171.3 490.2,177.3 495.0,184.5 497.5,191.7 499.9,200.2 503.5,208.6 504.7,213.4 509.5,217.0 508.3,223.0 511.9,230.2 515.5,229.0 520.3,235.0 525.1,242.3 528.7,247.1 527.5,253.1 520.3,257.4 515.5,253.1 513.1,245.9 505.9,238.7 497.5,230.2 491.4,225.4 490.2,223.0 484.2,219.4 480.6,215.8 481.8,209.8 484.2,202.6 480.6,194.1 474.6,186.9 468.6,179.7 465.0,174.9 459.0,176.1 451.7,170.1 445.7,165.3 440.9,159.2 436.1,154.9 448.1,154.0 453.4,151.5 454.4,144.5 451.0,138.7 445.2,131.5 441.4,124.3 435.6,117.6 428.4,112.7 426.9,106.0 423.3,100.7 424.1,95.4 420.5,88.7 418.0,82.7 415.9,77.9 414.9,72.3 412.0,66.5 410.8,62.2 409.0,57.0"/>
<polygon fill="#009540" stroke="#000" stroke-width="0.45" points="437.8,143.6 440.6,143.6 440.6,146.8 437.8,146.8"/>
<polygon fill="#009540" stroke="#000" stroke-width="0.45" points="431.5,152.6 433.0,152.6 433.0,154.0 431.5,154.0"/>
<polygon fill="#fafafa" stroke="#000" stroke-width="0.45" points="449.6,153.6 452.0,152.8 454.0,155.4 452.6,158.0 450.4,157.0"/>
<polygon fill="#fad20a" stroke="#000" stroke-width="0.45" points="486.0,165.5 487.6,165.8 488.0,168.2 486.4,168.0"/>
<polygon fill="#fad20a" stroke="#000" stroke-width="0.45" points="490.0,178.0 491.8,177.6 493.0,181.4 491.2,182.0"/>
<polygon fill="#fad20a" stroke="#000" stroke-width="0.45" points="500.6,193.6 501.6,193.6 502.0,197.6 501.0,197.6"/>
<polygon fill="#009540" stroke="#000" stroke-width="0.45" points="512.6,224.0 514.0,224.6 514.6,229.0 513.2,228.4"/>
<polygon fill="#009540" stroke="#000" stroke-width="0.45" points="521.0,227.6 522.4,228.4 523.0,231.8 521.6,231.0"/>
<polygon fill="#009540" stroke="#000" stroke-width="0.45" points="938.0,292.6 939.8,293.0 940.0,297.0 938.4,296.6"/>
<polygon fill="#009540" stroke="#000" stroke-width="0.45" points="460.6,98.6 462.4,99.4 464.6,103.8 462.8,103.6"/>
<polygon fill="#000" fill-opacity="0.55" points="708.8,322.6 714.1,321.1 719.3,322.6 721.6,326.4 719.3,330.9 714.1,332.4 709.2,330.2 707.3,326.4"/>
<defs><linearGradient id="tg" x1="0" y1="0" x2="1" y2="1"><stop offset="0" stop-color="#c9923f"/><stop offset=".35" stop-color="#a8683a"/><stop offset="1" stop-color="#7b3f27"/></linearGradient></defs>
<rect x="274.5" y="67.5" width="53" height="53" fill="#fff" stroke="#b9b9b9" stroke-width="1"/><path d="M274.5 120.5V67.5H327.5" fill="none" stroke="#7d7d7d" stroke-width="1"/>
<polygon points="280.1,74.5 280.1,74.9 285.1,77.4 288.7,77.5 289.6,77.6 289.6,76.8 291.6,77.0 292.4,77.1 292.6,77.5 293.1,78.0 293.6,78.5 294.4,79.1 294.6,79.6 294.9,80.1 295.4,80.7 296.1,81.4 296.8,81.8 297.1,81.9 297.4,81.1 297.7,80.6 298.4,80.4 299.6,80.5 300.2,81.0 300.8,81.7 301.1,82.4 301.7,83.2 302.1,84.1 302.5,84.3 302.7,85.1 303.1,85.9 303.8,86.5 304.7,86.8 305.6,87.0 306.3,87.0 306.1,87.5 305.9,88.3 305.5,89.1 305.4,90.2 305.4,91.2 305.4,92.3 305.4,93.1 305.8,93.7 306.1,94.0 306.3,94.6 306.4,95.2 306.8,96.1 307.4,96.7 307.9,97.5 308.1,98.2 308.6,98.8 309.3,99.2 309.7,99.3 310.4,99.5 310.9,100.0 311.3,100.1 311.8,99.8 312.6,99.5 313.3,99.4 313.9,99.2 314.3,99.1 315.0,98.9 315.7,98.6 316.3,98.3 316.9,97.8 317.2,97.2 317.3,96.6 317.4,95.9 317.4,95.2 317.6,94.6 318.3,94.2 319.4,93.9 320.2,93.6 321.1,93.4 321.9,93.5 322.3,93.2 322.8,93.3 323.0,93.9 322.9,94.7 322.4,95.4 322.2,96.1 322.1,96.8 321.9,97.7 321.7,98.5 321.5,99.0 321.2,98.5 321.0,99.0 320.6,99.5 320.0,99.9 319.2,100.0 318.1,100.1 316.9,100.1 316.8,100.1 316.9,101.0 316.6,101.4 317.1,101.8 317.6,102.2 318.0,102.6 318.1,103.1 317.5,103.2 316.7,103.3 315.8,103.4 315.6,103.8 315.4,104.4 315.2,105.0 315.3,105.5 315.2,106.0 315.0,105.8 314.6,105.5 314.1,105.0 313.8,104.5 313.4,104.4 312.8,104.0 312.3,103.6 311.8,103.3 311.1,103.4 310.3,103.6 309.4,103.9 308.7,104.2 308.1,104.4 307.3,104.2 306.4,103.9 305.9,103.8 305.0,103.6 304.2,103.3 303.4,103.0 302.4,102.7 301.7,102.3 300.8,101.9 300.1,101.6 299.4,101.1 298.5,100.7 297.8,100.5 296.9,100.3 296.1,99.8 295.6,99.2 294.9,98.7 294.2,98.3 293.6,97.7 293.2,97.0 292.8,96.4 293.2,96.0 293.5,95.3 293.7,94.5 293.2,94.0 293.0,93.3 293.3,92.7 292.8,92.3 292.2,91.7 291.6,91.1 291.1,90.4 290.4,89.8 290.2,89.6 289.8,89.2 289.4,88.8 289.5,88.3 288.9,88.0 288.1,87.6 287.6,87.3 287.4,86.8 287.6,86.2 287.2,85.7 286.8,85.4 286.6,85.0 286.3,84.7 285.8,84.3 285.5,83.7 285.1,83.1 284.9,82.6 284.2,82.3 283.9,82.0 283.5,81.4 283.3,80.6 283.0,79.9 282.6,79.2 282.4,78.4 282.4,77.8 282.1,77.3 281.7,77.1 281.3,76.6 280.9,76.6 280.3,76.3 279.9,76.0 280.1,76.2 279.9,76.4 279.7,76.9 279.9,77.5 279.7,77.8 280.0,78.2 280.0,78.8 280.2,79.4 280.8,79.9 281.1,80.4 281.6,81.1 281.9,81.6 282.1,82.2 282.3,82.8 282.5,83.4 283.1,83.9 283.3,84.5 283.7,85.0 284.1,85.6 284.3,86.3 284.5,87.0 284.9,87.8 285.0,88.2 285.4,88.5 285.3,89.0 285.6,89.6 285.9,89.5 286.3,90.1 286.7,90.7 287.1,91.1 287.0,91.6 286.3,92.0 285.9,91.6 285.7,91.0 285.1,90.4 284.3,89.6 283.8,89.2 283.7,89.0 283.2,88.7 282.9,88.4 283.0,87.9 283.2,87.2 282.9,86.5 282.3,85.9 281.8,85.2 281.5,84.8 281.0,84.9 280.3,84.4 279.8,84.0 279.4,83.4 279.0,83.1 280.0,83.0 280.5,82.8 280.6,82.1 280.3,81.6 279.8,81.0 279.4,80.4 278.9,79.8 278.3,79.4 278.2,78.8 277.8,78.3 277.9,77.9 277.6,77.3 277.4,76.7 277.2,76.3 277.1,75.8 276.9,75.3 276.8,75.0 276.6,74.5" fill="url(#tg)" stroke="#8a5a3a" stroke-width=".5" stroke-opacity=".6"/>
<path d="M292 80l1 5 3 2M297 78l2 6-1 5M303 84l-2 5 2 4M308 88l-3 4 1 5M300 94l4 2 3 4M312 97l-2 3" fill="none" stroke="#6b3620" stroke-width=".5" stroke-opacity=".7"/>
<text x="276.8" y="133.8" font-family="Liberation Sans, sans-serif" font-size="9.1" textLength="59" lengthAdjust="spacingAndGlyphs" fill="#222">NACIONAL</text>
</svg><!--/MAP--></div>

<div id="vsb" class="abs"><div class="sbtn abs" style="left:0;top:0;"><div class="abs" style="left:3.500px;top:4.500px;width:0;height:0;border-left:3.500px solid transparent;border-right:3.500px solid transparent;border-bottom:4px solid #000;"></div></div><div id="vth" class="abs"><svg class="abs" style="left:3px;top:139px" width="7" height="9"><path d="M0 .5h7M0 2.5h7M0 4.5h7M0 6.5h7M0 8.5h7" stroke="#8a8a8a" stroke-width="1"/></svg></div><div class="sbtn abs" style="left:0;top:346px;"><div class="abs" style="left:3.500px;top:5px;width:0;height:0;border-left:3.500px solid transparent;border-right:3.500px solid transparent;border-top:4px solid #000;"></div></div></div>
<div id="hsb" class="abs"><div class="sbtn abs" style="left:0;top:0;"><div class="abs" style="left:4px;top:3.500px;width:0;height:0;border-top:3.500px solid transparent;border-bottom:3.500px solid transparent;border-right:4px solid #000;"></div></div><div id="hth" class="abs"><svg class="abs" style="left:332px;top:3px" width="9" height="7"><path d="M.5 0v7M2.5 0v7M4.5 0v7M6.5 0v7M8.5 0v7" stroke="#8a8a8a" stroke-width="1"/></svg></div><div class="sbtn abs" style="left:710.5px;top:0;"><div class="abs" style="left:5px;top:3.500px;width:0;height:0;border-top:3.500px solid transparent;border-bottom:3.500px solid transparent;border-left:4px solid #000;"></div></div></div>
<div id="corner" class="abs"></div>
<div id="bcombo" class="abs"><div class="dv abs"></div><div class="arr abs" style="left:109px;top:8px;"></div></div>
<span class="t" style="left:262.5px;top:452px;font-size:9.6px;font-weight:bold;color:#2a1a22;width:84.5px;overflow:hidden;">Buscar Entidad-Distrito</span>
<svg class="abs" style="left:386px;top:442px" width="24" height="28" viewBox="0 0 24 28"><path d="M3 25.5 L10.5 14.5" stroke="#111" stroke-width="2.6" stroke-linecap="round"/><path d="M3.8 24.6 L10.2 15.2" stroke="#e8e8e8" stroke-width="0.9" stroke-linecap="round"/><circle cx="14.6" cy="9.6" r="6.6" fill="#f4f4f4" stroke="#b9b9b9" stroke-width="1.6"/><circle cx="13.5" cy="8.3" r="3.6" fill="#ffffff"/></svg>
<span class="t zl" style="left:422.8px;">100%</span>
<span class="t zl" style="left:484.7px;">200%</span>
<span class="t zl" style="left:546.7px;">300%</span>
<span class="t zl" style="left:608.6px;">400%</span>
<span class="t zl" style="left:670.5px;">500%</span>
<span class="t zl" style="left:732.5px;">600%</span>
<span class="t zl" style="left:794.4px;">700%</span>
<span class="t zl" style="left:856.3px;">800%</span>
<span class="t zl" style="left:918.2px;">900%</span>
<span class="t zl" style="left:973.5px;">1000%</span>

<div id="track" class="abs"></div>
<svg class="abs" style="left:447px;top:460px" width="14" height="14" viewBox="0 0 14 14"><path d="M7 1.5 L12.5 13 H1.5 Z" fill="#d9c3cc" stroke="#a88a98" stroke-width="1"/></svg>
</body>
</html>
